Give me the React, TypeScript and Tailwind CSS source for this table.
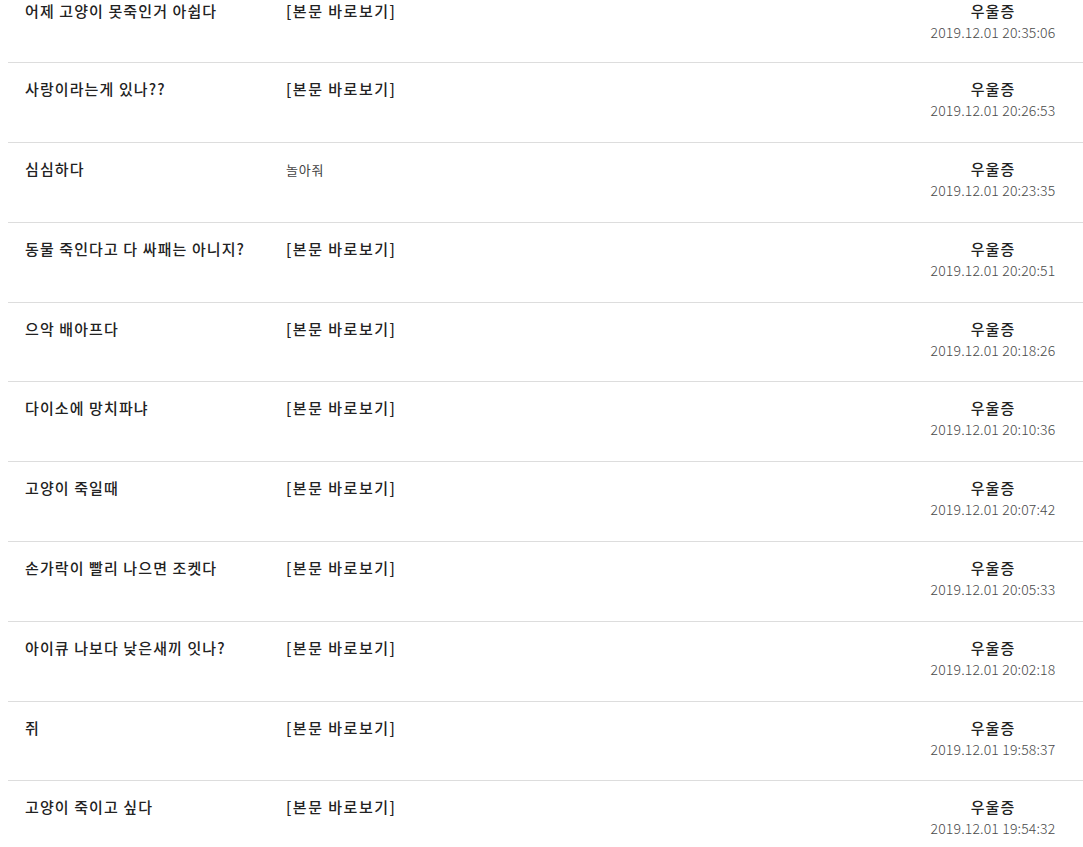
import React from "react";

type Row = { title: string; body: string; plain?: boolean; author: string; date: string };

const rows: Row[] = [
  { title: "어제 고양이 못죽인거 아쉽다", body: "[본문 바로보기]", author: "우울증", date: "2019.12.01 20:35:06" },
  { title: "사랑이라는게 있나??", body: "[본문 바로보기]", author: "우울증", date: "2019.12.01 20:26:53" },
  { title: "심심하다", body: "놀아줘", plain: true, author: "우울증", date: "2019.12.01 20:23:35" },
  { title: "동물 죽인다고 다 싸패는 아니지?", body: "[본문 바로보기]", author: "우울증", date: "2019.12.01 20:20:51" },
  { title: "으악 배아프다", body: "[본문 바로보기]", author: "우울증", date: "2019.12.01 20:18:26" },
  { title: "다이소에 망치파냐", body: "[본문 바로보기]", author: "우울증", date: "2019.12.01 20:10:36" },
  { title: "고양이 죽일때", body: "[본문 바로보기]", author: "우울증", date: "2019.12.01 20:07:42" },
  { title: "손가락이 빨리 나으면 조켓다", body: "[본문 바로보기]", author: "우울증", date: "2019.12.01 20:05:33" },
  { title: "아이큐 나보다 낮은새끼 잇나?", body: "[본문 바로보기]", author: "우울증", date: "2019.12.01 20:02:18" },
  { title: "쥐", body: "[본문 바로보기]", author: "우울증", date: "2019.12.01 19:58:37" },
  { title: "고양이 죽이고 싶다", body: "[본문 바로보기]", author: "우울증", date: "2019.12.01 19:54:32" },
];

const heights = [
  "h-[62px] pt-[1px]",
  "h-[80px] pt-[16px]",
  "h-[80px] pt-[16px]",
  "h-[80px] pt-[16px]",
  "h-[79px] pt-[16px]",
  "h-[80px] pt-[16px]",
  "h-[80px] pt-[16px]",
  "h-[80px] pt-[16px]",
  "h-[80px] pt-[16px]",
  "h-[79px] pt-[16px]",
  "h-[80px] pt-[16px]",
];

export default function App() {
  return (
    <div
      className="w-[1083px] h-[847px] overflow-hidden bg-white"
      style={{ fontFamily: '"Noto Sans CJK KR", "Noto Sans", sans-serif' }}
    >
      <div className="ml-[8px]">
        {rows.map((r, i) => (
          <div
            key={i}
            className={`flex ${heights[i]} ${i === 0 ? "" : "border-t border-[#dddddd]"}`}
          >
            <div className="w-[278px] pl-[17px] text-[15px] leading-[20px] text-[#222] font-medium tracking-[1.1px] whitespace-nowrap">
              {r.title}
            </div>
            <div
              className={
                r.plain
                  ? "flex-1 pt-[1px] text-[13px] leading-[20px] text-[#444] font-normal tracking-[0.8px] whitespace-nowrap"
                  : "flex-1 text-[15px] leading-[20px] text-[#222] font-medium tracking-[1.5px] whitespace-nowrap"
              }
            >
              {r.body}
            </div>
            <div className="w-[150px] mr-[15px] flex flex-col items-center">
              <div className="text-[15px] leading-[20px] text-[#222] font-medium tracking-[1px]">{r.author}</div>
              <div className="text-[14px] leading-[22px] text-[#4a4a4a] font-light tracking-[0.15px] whitespace-nowrap">
                {r.date}
              </div>
            </div>
          </div>
        ))}
      </div>
    </div>
  );
}
